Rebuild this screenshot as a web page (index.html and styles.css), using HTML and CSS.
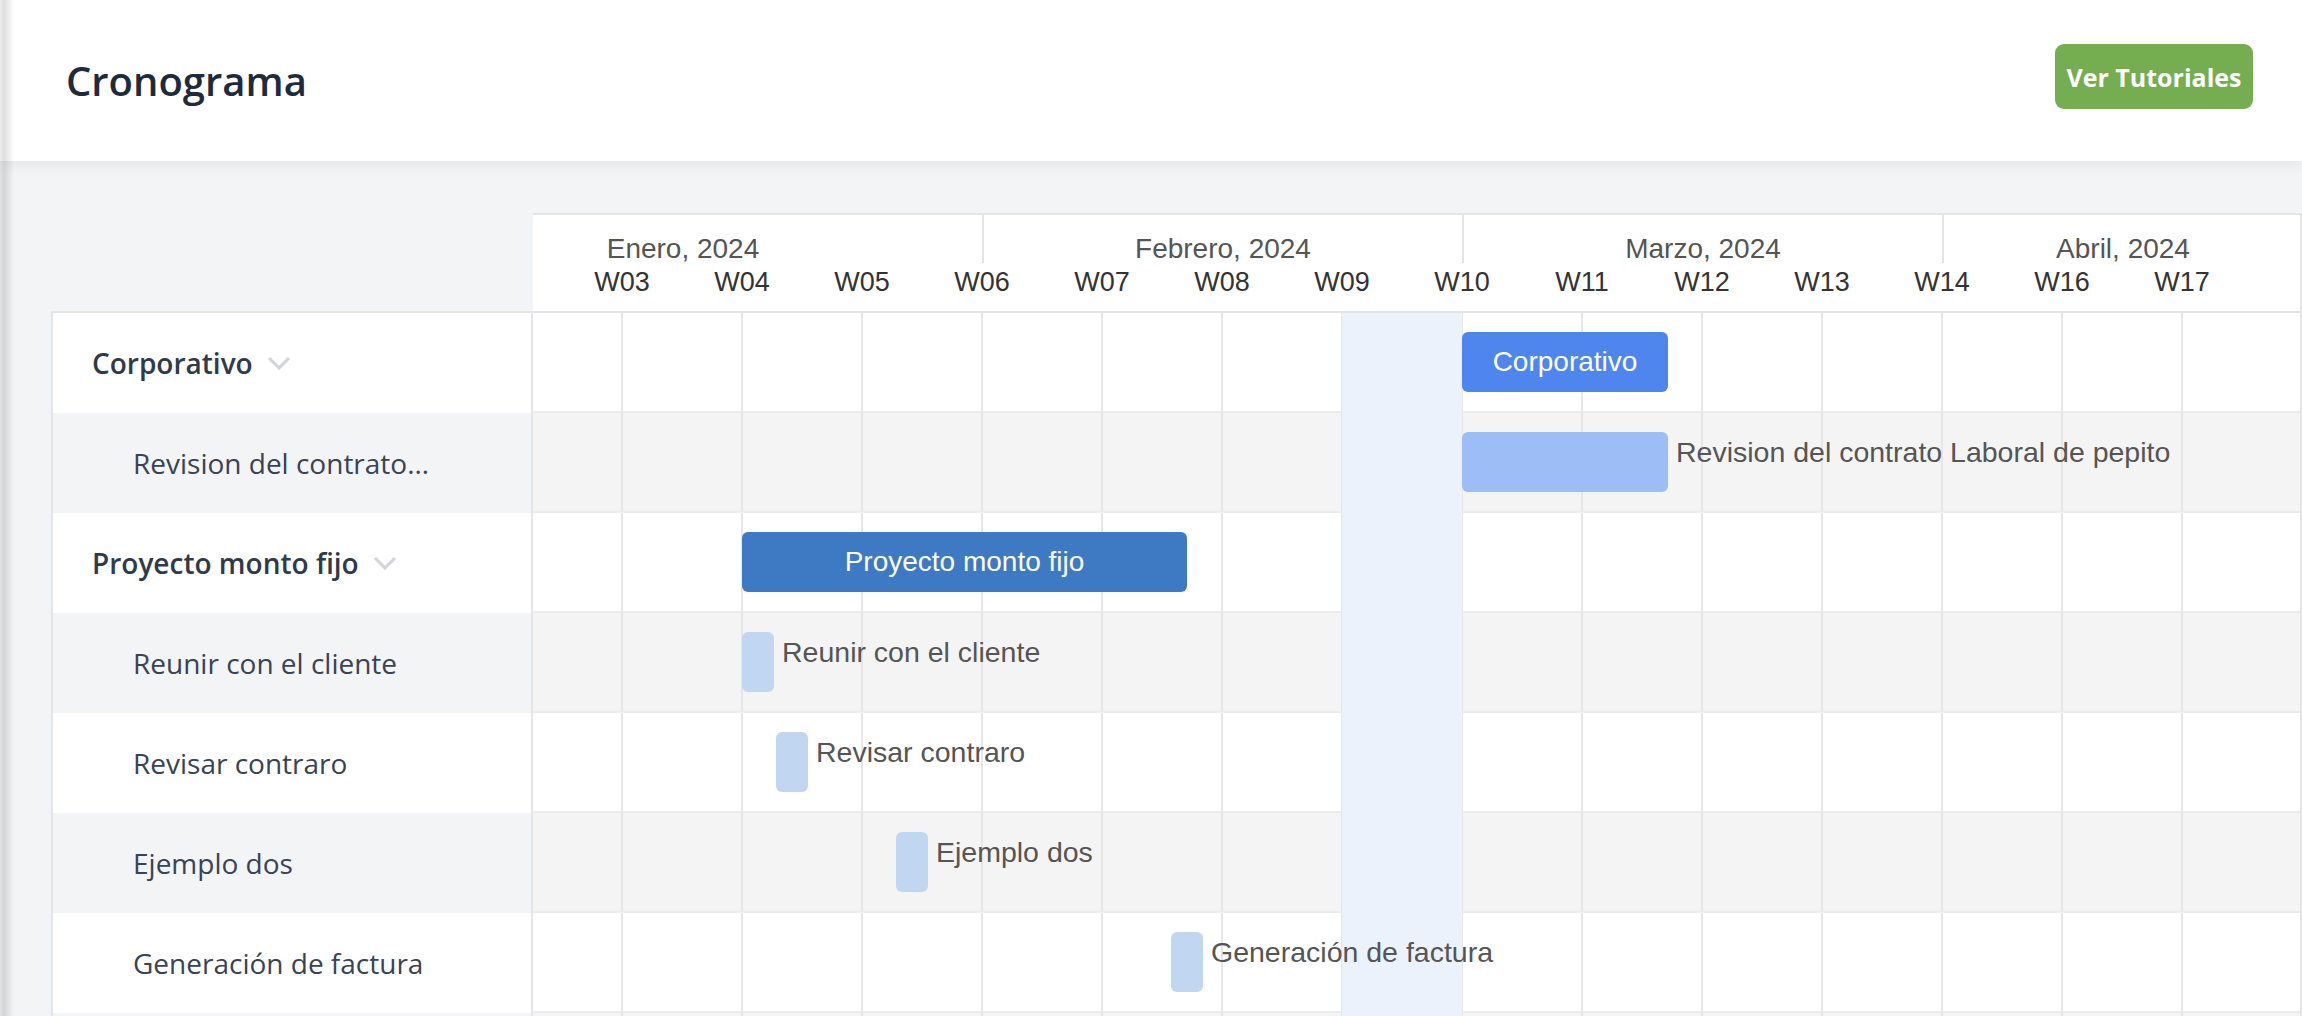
FILE: index.html
```html
<!DOCTYPE html>
<html lang="es">
<head>
    <meta charset="UTF-8">
    <meta name="viewport" content="width=device-width, initial-scale=1.0">
    <title>Cronograma</title>
    <link rel="stylesheet" href="styles.css">
</head>
<body>
    <div class="page">
        <header class="topbar">
            <h1>Cronograma</h1>
            <button class="btn-tutorials">Ver Tutoriales</button>
        </header>

        <main class="content">
            <div class="gantt">
                <!-- Task names -->
                <div class="task-list">
                    <div class="task group">
                        <span class="task-name">Corporativo</span>
                        <svg class="chevron" viewBox="0 0 24 14"><polyline points="2,2 12,12 22,2"/></svg>
                    </div>
                    <div class="task child"><span class="task-name">Revision del contrato Laboral de pepito</span></div>
                    <div class="task group">
                        <span class="task-name">Proyecto monto fijo</span>
                        <svg class="chevron" viewBox="0 0 24 14"><polyline points="2,2 12,12 22,2"/></svg>
                    </div>
                    <div class="task child"><span class="task-name">Reunir con el cliente</span></div>
                    <div class="task child"><span class="task-name">Revisar contraro</span></div>
                    <div class="task child"><span class="task-name">Ejemplo dos</span></div>
                    <div class="task child"><span class="task-name">Generación de factura</span></div>
                    <div class="task child"></div>
                </div>

                <!-- Timeline -->
                <div class="chart">
                    <div class="chart-inner">
                        <div class="chart-header">
                            <div class="months">
                                <div class="month m5">Enero, 2024</div>
                                <div class="month m4">Febrero, 2024</div>
                                <div class="month m4">Marzo, 2024</div>
                                <div class="month m3">Abril, 2024</div>
                            </div>
                            <div class="weeks">
                                <!-- W01 and W02 sit under the task list -->
                                <div class="week"></div>
                                <div class="week"></div>
                                <div class="week">W03</div>
                                <div class="week">W04</div>
                                <div class="week">W05</div>
                                <div class="week">W06</div>
                                <div class="week">W07</div>
                                <div class="week">W08</div>
                                <div class="week">W09</div>
                                <div class="week">W10</div>
                                <div class="week">W11</div>
                                <div class="week">W12</div>
                                <div class="week">W13</div>
                                <div class="week">W14</div>
                                <div class="week">W16</div>
                                <div class="week">W17</div>
                            </div>
                        </div>

                        <div class="chart-body">
                            <div class="row">
                                <div class="bar bar-group" style="left: 1080px; width: 206px;">Corporativo</div>
                            </div>
                            <div class="row">
                                <div class="bar bar-task" style="left: 1080px; width: 206px;">
                                    <span class="bar-label">Revision del contrato Laboral de pepito</span>
                                </div>
                            </div>
                            <div class="row">
                                <div class="bar bar-project" style="left: 360px; width: 445px;">Proyecto monto fijo</div>
                            </div>
                            <div class="row">
                                <div class="bar bar-small" style="left: 360px; width: 32px;">
                                    <span class="bar-label">Reunir con el cliente</span>
                                </div>
                            </div>
                            <div class="row">
                                <div class="bar bar-small" style="left: 394px; width: 32px;">
                                    <span class="bar-label">Revisar contraro</span>
                                </div>
                            </div>
                            <div class="row">
                                <div class="bar bar-small" style="left: 514px; width: 32px;">
                                    <span class="bar-label">Ejemplo dos</span>
                                </div>
                            </div>
                            <div class="row">
                                <div class="bar bar-small" style="left: 789px; width: 32px;">
                                    <span class="bar-label">Generación de factura</span>
                                </div>
                            </div>
                            <div class="row"></div>

                            <!-- current week -->
                            <div class="today"></div>
                        </div>
                    </div>
                </div>
            </div>
        </main>
    </div>
</body>
</html>
```

FILE: styles.css
```css
html, body {
    height: 100%;
}

body {
    margin: 0;
    padding: 0;
    font-family: "Open Sans", "Noto Sans", sans-serif;
    background-color: #f3f4f6;
    overflow: hidden;
}

.page {
    position: relative;
    min-height: 100%;
}

/* shadow of the sidebar on the left edge */
.page::before {
    content: "";
    position: absolute;
    top: 0;
    bottom: 0;
    left: 0;
    width: 14px;
    background: linear-gradient(to right, rgba(0, 0, 0, 0.07) 0, rgba(0, 0, 0, 0.13) 4px, rgba(0, 0, 0, 0) 14px);
    z-index: 10;
}

.topbar {
    height: 161px;
    box-sizing: border-box;
    background-color: #fff;
    display: flex;
    align-items: center;
    justify-content: space-between;
    padding: 0 49px 0 66px;
    box-shadow: 0 4px 14px rgba(0, 0, 0, 0.06);
    position: relative;
    z-index: 2;
}

.topbar h1 {
    margin: 0;
    font-size: 40px;
    font-weight: 600;
    color: #1f2a3d;
}

.btn-tutorials {
    font-family: "Open Sans", sans-serif;
    font-size: 25px;
    font-weight: 700;
    color: #fff;
    background-color: #75ad51;
    border: none;
    border-radius: 9px;
    width: 198px;
    height: 65px;
    margin-bottom: 8px;
    cursor: pointer;
}

.content {
    padding: 52px 0 0 51px;
}

.gantt {
    display: flex;
}

/* left column */
.task-list {
    width: 482px;
    flex-shrink: 0;
    box-sizing: border-box;
    margin-top: 98px;
    border-top: 2px solid #e4e5e8;
    border-left: 2px solid #e4e5e8;
    border-right: 2px solid #e4e5e8;
}

.task {
    height: 100px;
    display: flex;
    align-items: center;
    background-color: #fff;
}

.task:nth-child(even) {
    background-color: #f3f4f6;
}

.task.group {
    padding-left: 39px;
    font-size: 28px;
    font-weight: 600;
    color: #2f3a4b;
}

.task.child {
    padding-left: 80px;
    font-size: 28px;
    color: #394353;
}

.task-name {
    white-space: nowrap;
    overflow: hidden;
    text-overflow: ellipsis;
    max-width: 297px;
}

.chevron {
    width: 24px;
    height: 14px;
    margin-left: 14px;
    fill: none;
    stroke: #cfd3da;
    stroke-width: 3;
}

/* timeline */
.chart {
    flex: 1;
    overflow: hidden;
    border-right: 2px solid #e4e4e4;
    font-family: "Liberation Sans", Arial, sans-serif;
}

.chart-inner {
    margin-left: -151px;
    width: 1920px;
}

.chart-header {
    height: 100px;
    box-sizing: border-box;
    background-color: #fff;
    border-top: 2px solid #e4e4e4;
    border-bottom: 2px solid #e4e4e4;
}

.months {
    display: flex;
    height: 48px;
}

.month {
    box-sizing: border-box;
    padding-top: 20px;
    line-height: 27px;
    font-size: 28px;
    color: #555;
    text-align: center;
    border-left: 2px solid #e4e4e4;
}

.month.m5 { width: 600px; }
.month.m4 { width: 480px; }
.month.m3 { width: 360px; }

.weeks {
    display: flex;
    margin-left: -60px;
    height: 48px;
}

.week {
    width: 120px;
    flex-shrink: 0;
    box-sizing: border-box;
    padding-top: 6px;
    line-height: 27px;
    font-size: 27px;
    color: #333;
    text-align: center;
}

.chart-body {
    position: relative;
}

.row {
    position: relative;
    height: 100px;
    box-sizing: border-box;
    border-bottom: 2px solid #ececec;
    background-color: #fff;
    background-image: linear-gradient(to right, #e6e6e6 0, #e6e6e6 2px, transparent 2px);
    background-size: 120px 100%;
    background-position: -1px 0;
}

.row:nth-child(even) {
    background-color: #f4f4f4;
}

.today {
    position: absolute;
    top: 0;
    bottom: 0;
    left: 960px;
    width: 120px;
    background-color: #ebf2fc;
}

.bar {
    position: absolute;
    top: 19px;
    height: 60px;
    border-radius: 6px;
    z-index: 1;
    color: #fff;
    font-size: 28px;
    line-height: 60px;
    text-align: center;
    white-space: nowrap;
}

.bar-group {
    background-color: #4f86ee;
}

.bar-project {
    background-color: #3e79c4;
}

.bar-task {
    background-color: #9dbdf6;
}

.bar-small {
    background-color: #c1d7f1;
}

.bar-label {
    position: absolute;
    left: calc(100% + 8px);
    top: 6px;
    font-size: 28.5px;
    line-height: 28px;
    color: #555;
}
```
